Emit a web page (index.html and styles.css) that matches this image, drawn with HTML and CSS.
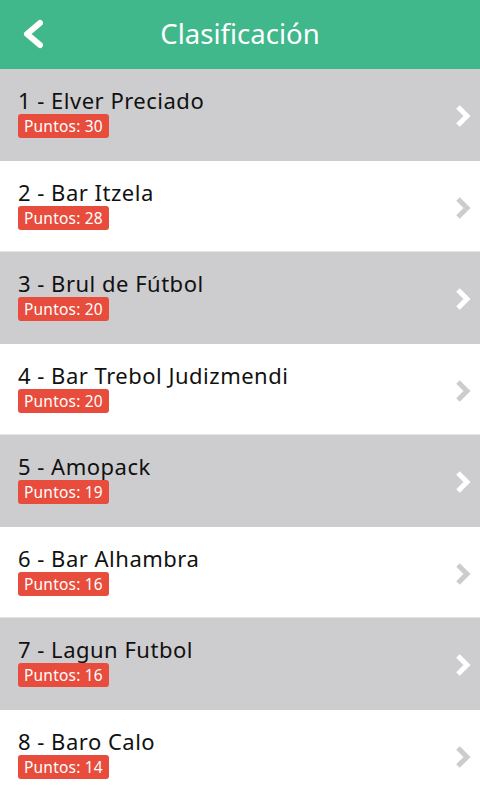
FILE: index.html
```html
<!DOCTYPE html>
<html>
  <head>
    <meta charset="UTF-8">
    <meta name="viewport" content="width=device-width, initial-scale=1">
    <title>Clasificación</title>
    <link rel="stylesheet" href="styles.css">
  </head>
  <body>
    <div class="topbar">
      <svg class="back" width="22" height="30" viewBox="0 0 22 30">
        <path d="M18 4 L5 15 L18 26" fill="none" stroke="#fff" stroke-width="6" stroke-linecap="round" stroke-linejoin="round"/>
      </svg>
      <h1>Clasificación</h1>
    </div>
    <ul class="ranking">
      <li class="team odd">
        <div class="info"><div class="name">1 - Elver Preciado</div><span class="points">Puntos: 30</span></div>
        <svg class="chev" width="18" height="26" viewBox="0 0 18 26"><path d="M4 4 L13 13 L4 22" fill="none" stroke-width="5"/></svg>
      </li>
      <li class="team">
        <div class="info"><div class="name">2 - Bar Itzela</div><span class="points">Puntos: 28</span></div>
        <svg class="chev" width="18" height="26" viewBox="0 0 18 26"><path d="M4 4 L13 13 L4 22" fill="none" stroke-width="5"/></svg>
      </li>
      <li class="team odd">
        <div class="info"><div class="name">3 - Brul de Fútbol</div><span class="points">Puntos: 20</span></div>
        <svg class="chev" width="18" height="26" viewBox="0 0 18 26"><path d="M4 4 L13 13 L4 22" fill="none" stroke-width="5"/></svg>
      </li>
      <li class="team">
        <div class="info"><div class="name">4 - Bar Trebol Judizmendi</div><span class="points">Puntos: 20</span></div>
        <svg class="chev" width="18" height="26" viewBox="0 0 18 26"><path d="M4 4 L13 13 L4 22" fill="none" stroke-width="5"/></svg>
      </li>
      <li class="team odd">
        <div class="info"><div class="name">5 - Amopack</div><span class="points">Puntos: 19</span></div>
        <svg class="chev" width="18" height="26" viewBox="0 0 18 26"><path d="M4 4 L13 13 L4 22" fill="none" stroke-width="5"/></svg>
      </li>
      <li class="team">
        <div class="info"><div class="name">6 - Bar Alhambra</div><span class="points">Puntos: 16</span></div>
        <svg class="chev" width="18" height="26" viewBox="0 0 18 26"><path d="M4 4 L13 13 L4 22" fill="none" stroke-width="5"/></svg>
      </li>
      <li class="team odd">
        <div class="info"><div class="name">7 - Lagun Futbol</div><span class="points">Puntos: 16</span></div>
        <svg class="chev" width="18" height="26" viewBox="0 0 18 26"><path d="M4 4 L13 13 L4 22" fill="none" stroke-width="5"/></svg>
      </li>
      <li class="team">
        <div class="info"><div class="name">8 - Baro Calo</div><span class="points">Puntos: 14</span></div>
        <svg class="chev" width="18" height="26" viewBox="0 0 18 26"><path d="M4 4 L13 13 L4 22" fill="none" stroke-width="5"/></svg>
      </li>
    </ul>
  </body>
</html>
```

FILE: styles.css
```css
body {
  margin: 0;
  font-family: "Noto Sans", "Open Sans", sans-serif;
  background: #fff;
  overflow: hidden;
}
.topbar {
  height: 69px;
  background: #41b78c;
  display: flex;
  align-items: center;
  justify-content: center;
  position: relative;
}
.topbar h1 {
  margin: 0 0 2px 0;
  color: #fff;
  font-weight: normal;
  font-size: 27.5px;
}
.back {
  position: absolute;
  left: 22px;
  top: 19px;
}
.ranking {
  list-style: none;
  margin: 0;
  padding: 0;
}
.team {
  height: 91.5px;
  box-sizing: border-box;
  display: flex;
  align-items: center;
  padding: 0 8px 0 18px;
  border-bottom: 1px solid #e4e4e4;
}
.team.odd {
  background: #cdcccf;
  border-bottom-color: #cdcccf;
}
.info {
  flex: 1;
  padding-bottom: 4px;
}
.name {
  font-size: 22px;
  letter-spacing: 0.5px;
  color: #111;
  line-height: 28px;
}
.points {
  display: inline-block;
  background: #e74c3c;
  color: #fff;
  font-size: 15.5px;
  letter-spacing: 0.2px;
  line-height: 24px;
  padding: 0 6px;
  border-radius: 3px;
}
.chev {
  margin-top: 4px;
}
.chev path {
  stroke: #cccccc;
}
.odd .chev path {
  stroke: #fff;
}
```
